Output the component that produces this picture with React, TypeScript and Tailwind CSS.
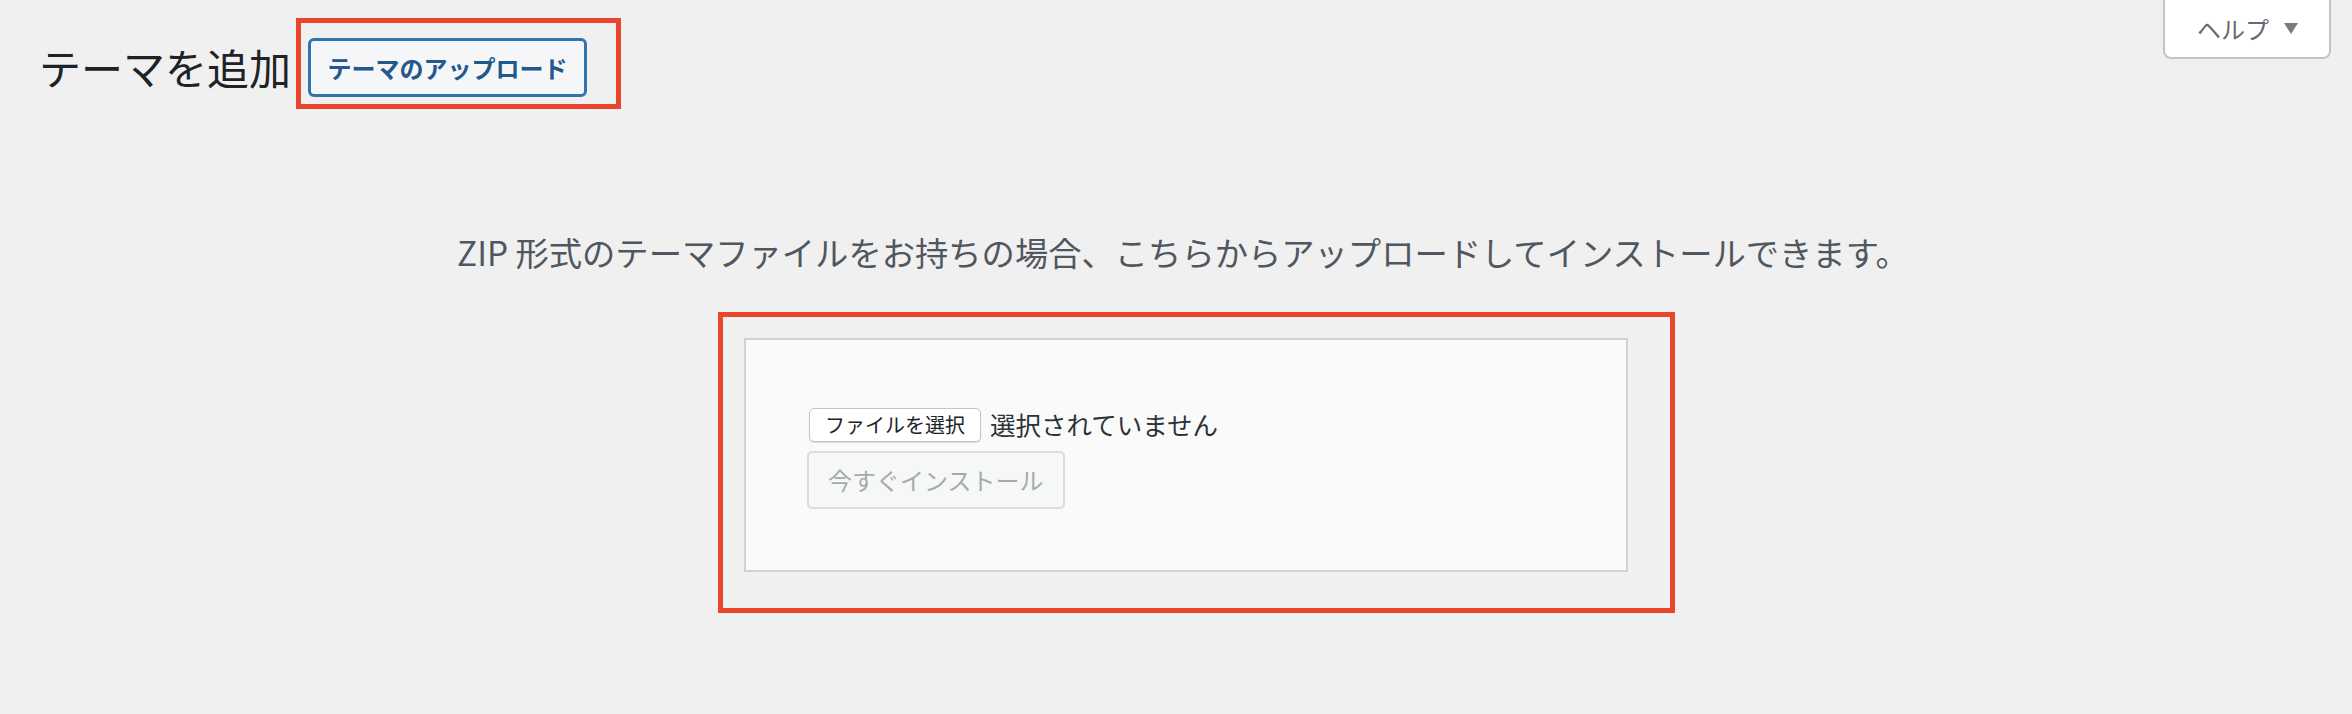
import React from "react";

export default function App() {
  return (
    <div className="min-h-[714px] w-full bg-[#f0f0f1] font-['Noto_Sans_CJK_JP','Noto_Sans',sans-serif]">
      <div className="flex items-start justify-between pr-[21px]">
        <div className="flex items-start pl-[39px] pt-[18px]">
          <h1 className="mt-[28px] text-[42px] font-normal leading-none text-[#1d2327]">テーマを追加</h1>
          <div className="ml-[5px] h-[91px] w-[325px] border-[5px] border-[#e9462b] pl-[7px] pt-[15px]">
            <a className="flex h-[59px] w-[279px] items-center justify-center rounded-[6px] border-[3px] border-[#2f74b0] bg-[#f5f6f7] text-[24px] font-bold leading-none text-[#21598d]">
              テーマのアップロード
            </a>
          </div>
        </div>
        <div className="-mt-[2px] flex h-[61px] w-[168px] items-center rounded-b-[8px] border-2 border-[#c3c4c7] bg-white pl-[32px]">
          <span className="text-[24px] leading-none text-[#646970]">ヘルプ</span>
          <svg className="ml-[15px]" width="14" height="11" viewBox="0 0 14 11">
            <polygon points="0,0 14,0 7,11" fill="#787c82" />
          </svg>
        </div>
      </div>

      <p className="mt-[126px] pl-[14px] text-center text-[33.3px] leading-none text-[#50575e]">
        ZIP 形式のテーマファイルをお持ちの場合、こちらからアップロードしてインストールできます。
      </p>

      <div className="ml-[718px] mt-[44px] h-[301px] w-[957px] border-[5px] border-[#e9462b] pl-[21px] pt-[21px]">
        <div className="h-[234px] w-[884px] border-2 border-[#cfd2d6] bg-[#fafafa] pl-[63px] pt-[68px]">
          <div className="flex items-center">
            <button className="flex h-[34px] w-[172px] items-center justify-center rounded-[5px] border border-[#c3c4c7] bg-white text-[20px] leading-none text-[#1d2327] shadow-[0_1px_1px_rgba(0,0,0,0.12)]">
              ファイルを選択
            </button>
            <span className="-mt-[4px] ml-[9px] text-[25.5px] leading-none text-[#2c3338]">選択されていません</span>
          </div>
          <button
            disabled
            className="-ml-[2px] mt-[9px] flex h-[58px] w-[258px] items-center rounded-[5px] border-2 border-[#dcdcde] bg-[#f6f7f7] pl-[19px] text-[24px] leading-none text-[#a7aaad]"
          >
            今すぐインストール
          </button>
        </div>
      </div>
    </div>
  );
}
